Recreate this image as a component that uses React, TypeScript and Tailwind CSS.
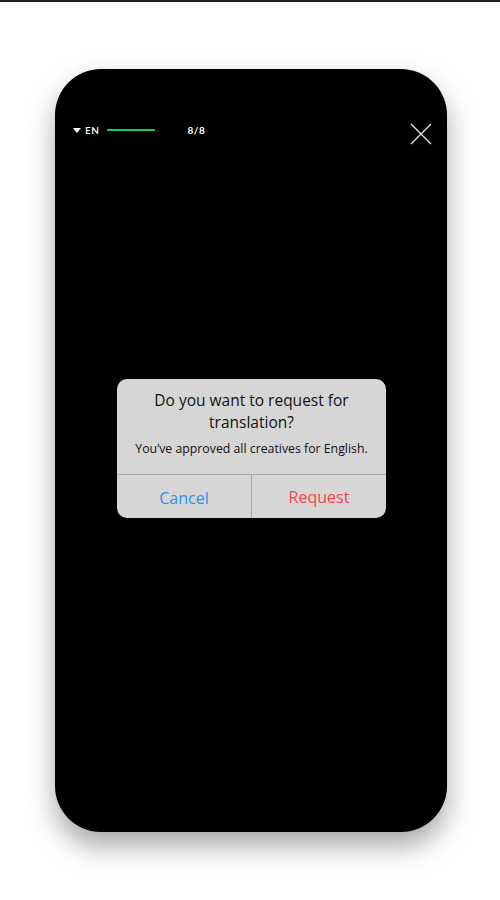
export default function App() {
  return (
    <div className="min-h-[900px] w-full bg-white border-t-2 border-[#222]" style={{ fontFamily: 'Lato, "Noto Sans", sans-serif' }}>
      <div className="pt-[67px] pl-[2px] flex justify-center">
        {/* Phone frame */}
        <div className="w-[392px] h-[763px] rounded-[46px] bg-black shadow-[0_14px_28px_rgba(0,0,0,0.35)] flex flex-col">
          {/* Top bar */}
          <div className="flex items-center h-[20px] mt-[51px] pl-[18px] pr-[15px]">
            <div className="w-0 h-0 border-l-[4px] border-r-[4px] border-t-[5px] border-l-transparent border-r-transparent border-t-white" />
            <span className="ml-[4px] text-[10px] font-semibold tracking-[0.5px] text-white">EN</span>
            <div className="ml-[8px] w-[48px] h-[2px] bg-[#1ccc4f]" />
            <span className="ml-[32px] text-[10px] font-bold tracking-[0.5px] text-white">8/8</span>
            <button className="ml-auto mt-[7px] mr-[0px]">
              <svg width="22" height="22" viewBox="0 0 22 22" fill="none" stroke="#e5e5e5" strokeWidth="1.3">
                <path d="M1 1L21 21M21 1L1 21" />
              </svg>
            </button>
          </div>

          {/* Dialog */}
          <div className="flex-1 flex items-center justify-center pl-[1px] pb-[75px]" style={{ fontFamily: '"Open Sans", sans-serif' }}>
            <div className="w-[269px] rounded-[10px] bg-[#d6d6d6] overflow-hidden">
              <div className="px-3 pt-[10px] pb-[17px] text-center">
                <h2 className="text-[15.5px] leading-[22px] font-medium text-[#111]">Do you want to request for translation?</h2>
                <p className="mt-[8px] text-[12.3px] leading-[16px] font-medium text-[#111]">You’ve approved all creatives for English.</p>
              </div>
              <div className="flex border-t border-[#a8a8a8]">
                <button className="flex-1 h-[43px] pt-[2px] text-[16px] font-medium text-[#2e8ff2] border-r border-[#a8a8a8]">Cancel</button>
                <button className="flex-1 h-[43px] text-[16px] font-medium text-[#f2464a]">Request</button>
              </div>
            </div>
          </div>
        </div>
      </div>
    </div>
  )
}
